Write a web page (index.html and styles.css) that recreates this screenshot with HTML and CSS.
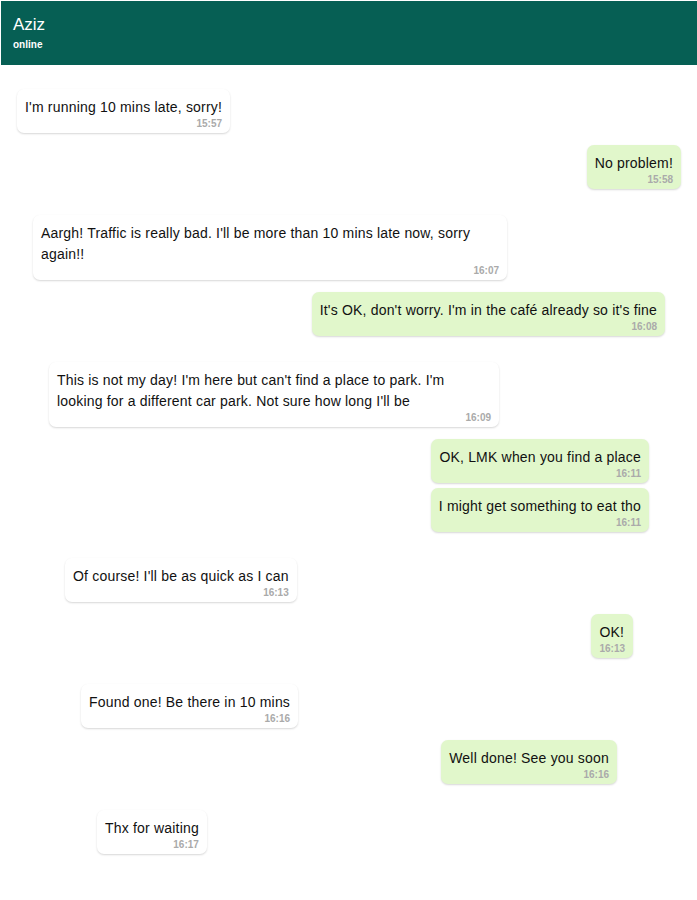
FILE: index.html
```html
<!DOCTYPE html>
<html lang="en">
<head>
<meta charset="utf-8">
<title>Aziz</title>
<link rel="stylesheet" href="styles.css">
</head>
<body>
<div class="app">
  <header class="header">
    <div class="name">Aziz</div>
    <div class="status">online</div>
  </header>
  <main class="chat">
    <div class="level">
      <div class="msg in"><p>I'm running 10 mins late, sorry!</p><span class="time">15:57</span></div>
      <div class="msg out"><p>No problem!</p><span class="time">15:58</span></div>
      <div class="level">
        <div class="msg in"><p>Aargh! Traffic is really bad. I'll be more than 10 mins late now, sorry again!!</p><span class="time">16:07</span></div>
        <div class="msg out"><p>It's OK, don't worry. I'm in the café already so it's fine</p><span class="time">16:08</span></div>
        <div class="level">
          <div class="msg in"><p>This is not my day! I'm here but can't find a place to park. I'm looking for a different car park. Not sure how long I'll be</p><span class="time">16:09</span></div>
          <div class="msg out"><p>OK, LMK when you find a place</p><span class="time">16:11</span></div>
          <div class="msg out"><p>I might get something to eat tho</p><span class="time">16:11</span></div>
          <div class="level">
            <div class="msg in"><p>Of course! I'll be as quick as I can</p><span class="time">16:13</span></div>
            <div class="msg out"><p>OK!</p><span class="time">16:13</span></div>
            <div class="level">
              <div class="msg in"><p>Found one! Be there in 10 mins</p><span class="time">16:16</span></div>
              <div class="msg out"><p>Well done! See you soon</p><span class="time">16:16</span></div>
              <div class="level">
                <div class="msg in"><p>Thx for waiting</p><span class="time">16:17</span></div>
              </div>
            </div>
          </div>
        </div>
      </div>
    </div>
  </main>
</div>
</body>
</html>
```

FILE: styles.css
```css
html, body {
  margin: 0;
  padding: 0;
  background: #ffffff;
}

body {
  font-family: "Liberation Sans", Arial, sans-serif;
  color: #111;
}

.app {
  margin: 1px 0 0 1px;
}

.header {
  background: #065f54;
  color: #ffffff;
  height: 64px;
  box-sizing: border-box;
  padding: 13px 12px 0;
}

.name {
  font-size: 17px;
  line-height: 22px;
}

.status {
  font-size: 10px;
  font-weight: bold;
  line-height: 14px;
  margin-top: 2px;
}

.chat {
  padding: 24px 16px 40px;
}

.level {
  display: flex;
  flex-direction: column;
}

.level .level {
  padding: 0 16px;
  margin-top: 26px;
}

.msg {
  max-width: 75%;
  box-sizing: border-box;
  padding: 8px 8px 3px;
  border-radius: 7px;
  box-shadow: 0 1px 2px rgba(0, 0, 0, 0.16);
}

.msg p {
  margin: 0;
  font-size: 14px;
  line-height: 21px;
  letter-spacing: 0.19px;
}

.msg .time {
  display: block;
  text-align: right;
  font-size: 10px;
  font-weight: bold;
  line-height: 12px;
  color: #aaaaaa;
}

.in {
  align-self: flex-start;
  background: #ffffff;
}

.out {
  align-self: flex-end;
  background: #e1f7cb;
  margin-top: 12px;
}

.out + .out {
  margin-top: 5px;
}
```
